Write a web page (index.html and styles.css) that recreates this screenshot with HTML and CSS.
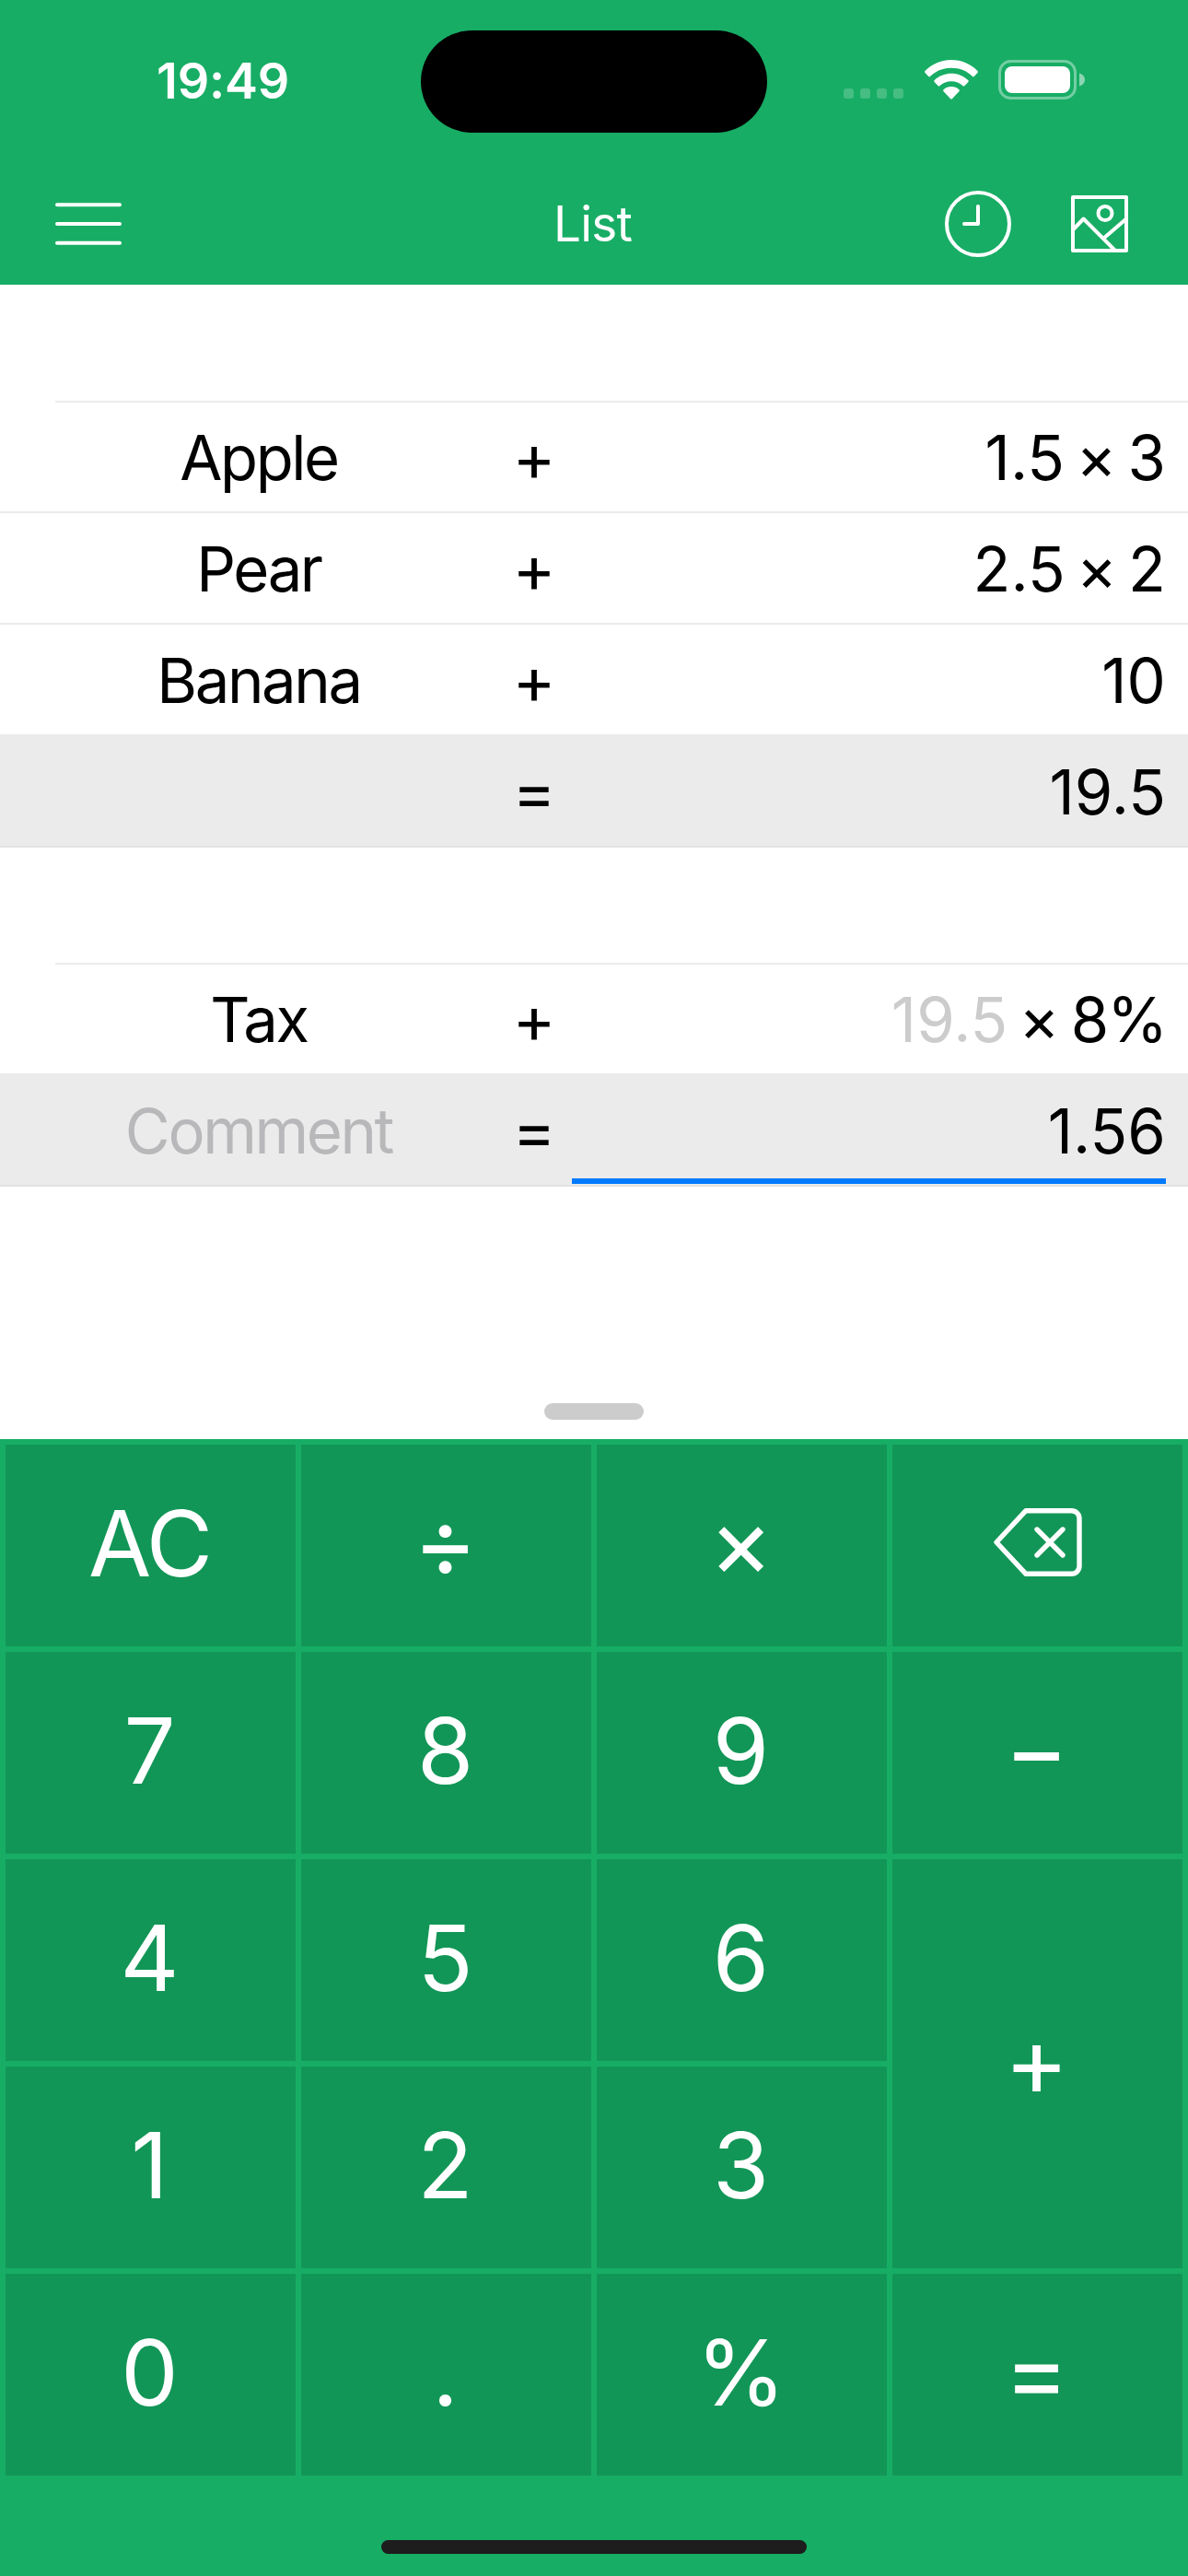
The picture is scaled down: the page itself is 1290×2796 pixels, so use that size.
FILE: index.html
```html
<!DOCTYPE html>
<html lang="en">
<head>
  <meta charset="UTF-8" />
  <meta name="viewport" content="width=device-width, initial-scale=1.0"/>
  <title>List</title>
  <link rel="stylesheet" href="styles.css">
</head>
<body>
  <header class="header">
    <div class="status-bar">
      <div class="time">19:49</div>
      <div class="island"></div>
      <div class="status-icons">
        <div class="signal"><i></i><i></i><i></i><i></i></div>
        <svg class="wifi" viewBox="0 0 58 43" fill="#fff">
          <path d="M29 0C40 0 50.500 4.500 57.500 12a1.500 1.500 0 0 1 0 2l-3.500 3.800a1.500 1.500 0 0 1-2.200 0C46 12 38 8.800 29 8.800S12 12 6.200 17.800a1.500 1.500 0 0 1-2.200 0L.5 14a1.500 1.500 0 0 1 0-2C7.500 4.500 18 0 29 0z"/>
          <path d="M29 14.700c7 0 13.500 2.700 18.200 7.300a1.500 1.500 0 0 1 0 2.200L43.500 28a1.500 1.500 0 0 1-2.100 0c-3.300-3-7.600-4.800-12.400-4.800S19.900 25 16.600 28a1.500 1.500 0 0 1-2.100 0l-3.700-3.800a1.500 1.500 0 0 1 0-2.200C15.500 17.400 22 14.700 29 14.700z"/>
          <path d="M29 29c3.200 0 6.200 1.200 8.400 3.200a1.500 1.500 0 0 1 0 2.100l-7.300 7.600a1.500 1.500 0 0 1-2.200 0l-7.300-7.600a1.500 1.500 0 0 1 0-2.100C22.800 30.200 25.800 29 29 29z"/>
        </svg>
        <svg class="battery" viewBox="0 0 95 43">
          <rect x="1.500" y="1.500" width="82" height="40" rx="12" fill="none" stroke="#fff" stroke-opacity=".4" stroke-width="3"/>
          <rect x="7" y="7" width="71" height="29" rx="8" fill="#fff"/>
          <path d="M88 14.500c3.500 1 6 3.500 6 7s-2.500 6-6 7z" fill="#fff" fill-opacity=".5"/>
        </svg>
      </div>
    </div>
    <div class="nav">
      <svg class="icon" viewBox="0 0 72 72">
        <path d="M2 15.200h68M2 36h68M2 56.800h68"/>
      </svg>
      <h1>List</h1>
      <div class="nav-right">
        <svg class="icon" viewBox="0 0 72 72">
          <circle cx="36" cy="36" r="34"/>
          <path d="M36 17v19H21"/>
        </svg>
        <svg class="icon" viewBox="0 0 72 72">
          <rect x="7" y="7" width="58" height="58"/>
          <circle cx="42" cy="24.500" r="7.500"/>
          <path d="M7 42.500L18.500 30.500 53 65M40 52L65 30.500"/>
        </svg>
      </div>
    </div>
  </header>

  <main class="list">
    <div class="section">
      <div class="row first">
        <div class="label">Apple</div>
        <div class="op">+</div>
        <div class="value">1.5 × 3</div>
      </div>
      <div class="row">
        <div class="label">Pear</div>
        <div class="op">+</div>
        <div class="value">2.5 × 2</div>
      </div>
      <div class="row">
        <div class="label">Banana</div>
        <div class="op">+</div>
        <div class="value">10</div>
      </div>
      <div class="row total">
        <div class="label"></div>
        <div class="op">=</div>
        <div class="value">19.5</div>
      </div>
    </div>
    <div class="section">
      <div class="row first">
        <div class="label">Tax</div>
        <div class="op">+</div>
        <div class="value"><span class="ref">19.5</span> × <span class="percent">8%</span></div>
      </div>
      <div class="row total">
        <div class="label placeholder">Comment</div>
        <div class="op">=</div>
        <div class="value active">1.56</div>
      </div>
    </div>
    <div class="handle"></div>
  </main>

  <div class="keypad">
    <div class="key ac">AC</div>
    <div class="key sign">÷</div>
    <div class="key sign">×</div>
    <div class="key delete">
      <svg class="backspace" viewBox="0 0 96 74">
        <path d="M3 37L35 2.700H84.500a8.500 8.500 0 0 1 8.500 8.500V62.800a8.500 8.500 0 0 1-8.500 8.500H35z"/>
        <path d="M47 23L75 51M75 23L47 51"/>
      </svg>
    </div>
    <div class="key">7</div>
    <div class="key">8</div>
    <div class="key">9</div>
    <div class="key sign">−</div>
    <div class="key">4</div>
    <div class="key">5</div>
    <div class="key">6</div>
    <div class="key sign tall">+</div>
    <div class="key">1</div>
    <div class="key">2</div>
    <div class="key">3</div>
    <div class="key">0</div>
    <div class="key">.</div>
    <div class="key">%</div>
    <div class="key sign">=</div>
  </div>
  <div class="home-bar"></div>
</body>
</html>
```
FILE: styles.css
```css
* {
  box-sizing: border-box;
}

body {
  margin: 0;
  width: 1290px;
  height: 2796px;
  overflow: hidden;
  background: #17ad65;
  color: #000;
  font-family: Inter, Roboto, sans-serif;
  display: flex;
  flex-direction: column;
  user-select: none;
}

.header {
  height: 309px;
  color: white;
}

.status-bar {
  height: 177px;
  padding: 33px 111px 0 170px;
  display: grid;
  grid-template-columns: 287px 376px 1fr;
  align-items: start;
}

.time {
  height: 111px;
  line-height: 110px;
  font-size: 54px;
  font-weight: 600;
  letter-spacing: -0.2px;
}

.island {
  height: 111px;
  border-radius: 56px;
  background: black;
}

.status-icons {
  display: flex;
  justify-content: flex-end;
  padding-top: 32px;
}

.signal {
  display: flex;
  gap: 7px;
  padding-top: 31px;
  margin-right: 23px;
}

.signal i {
  width: 11px;
  height: 11px;
  border-radius: 3px;
  background: rgba(255,255,255,0.2);
}

.wifi {
  width: 58px;
  height: 43px;
  margin-right: 22px;
}

.battery {
  width: 95px;
  height: 43px;
}

.nav {
  height: 130px;
  padding: 0 60px;
  display: grid;
  grid-template-columns: 1fr auto 1fr;
  align-items: center;
}

h1 {
  margin: 0;
  padding: 1px 3px 0 0;
  font-size: 53px;
  font-weight: 400;
  line-height: 130px;
  letter-spacing: -0.8px;
}

.nav-right {
  display: flex;
  justify-content: flex-end;
  gap: 60px;
}

.icon {
  width: 72px;
  height: 72px;
  fill: none;
  stroke: white;
  stroke-width: 4;
  stroke-linecap: round;
  stroke-linejoin: round;
}

.list {
  height: 1253px;
  background: white;
  display: flex;
  flex-direction: column;
}

.section {
  padding-top: 126px;
}

.section + .section {
  padding-top: 125px;
}

.row {
  height: 121px;
  display: grid;
  grid-template-columns: 553px 54px 659px;
  border-top: 2px solid #ebebeb;
  font-size: 67px;
  line-height: 121px;
}

/* the first divider of a section is inset */
.row.first {
  height: 120px;
  padding-top: 1px;
  border-top: none;
  background: linear-gradient(#ebebeb, #ebebeb) 60px 0 / 1230px 2px no-repeat;
}

.row.total {
  height: 123px;
  padding-top: 2px;
  background: #ebebeb;
  border-top: none;
  border-bottom: 2px solid #e2e2e2;
}

.label {
  padding-left: 9px;
  text-align: center;
  letter-spacing: -2.4px;
}

.placeholder {
  color: #b8b8ba;
}

.op {
  text-align: center;
  font-size: 71px;
}

.value {
  position: relative;
  margin-left: 14px;
  text-align: right;
  letter-spacing: 0.1px;
  word-spacing: -7px;
}

.percent {
  letter-spacing: -2px;
}

.active::after {
  content: "";
  position: absolute;
  left: 0;
  right: 0;
  bottom: 3px;
  height: 6px;
  background: #007aff;
}

.ref {
  color: #ccc;
}

.handle {
  width: 108px;
  height: 18px;
  border-radius: 9px;
  background: #ccc;
  margin: auto auto 21px;
}

.keypad {
  padding: 6px;
  display: grid;
  grid-template-columns: repeat(4, 315px);
  grid-auto-rows: 219px;
  gap: 6px;
}

.key {
  background: #129657;
  color: white;
  font-size: 99px;
  display: flex;
  align-items: center;
  justify-content: center;
  cursor: pointer;
  padding: 0 2px 6px 0;
}

.key:active {
  background: #0e8049;
}

.key.ac {
  letter-spacing: -2px;
}

.key.sign {
  font-size: 106px;
  padding-bottom: 8px;
}

.key.delete {
  padding-right: 0;
  padding-bottom: 7px;
}

.key.tall {
  grid-row: span 2;
}

.backspace {
  width: 96px;
  height: 74px;
  fill: none;
  stroke: white;
  stroke-width: 5.4;
  stroke-linecap: round;
  stroke-linejoin: round;
}

.home-bar {
  width: 462px;
  height: 15px;
  border-radius: 8px;
  background: #1d1d1d;
  margin: 64px auto 0;
}
```
